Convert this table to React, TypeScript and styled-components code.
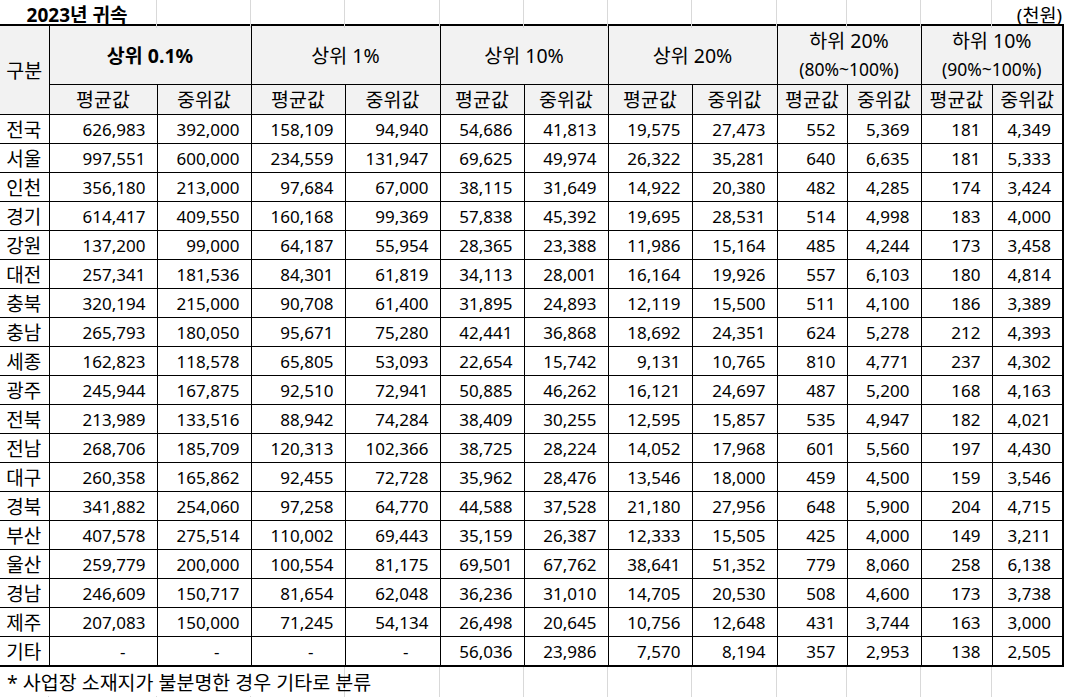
import React from 'react'
import styled, { createGlobalStyle } from 'styled-components'

const COLS = [49, 108, 94, 94, 95, 84, 84, 84, 85, 70, 74, 71, 71]
const GRID = COLS.map((w) => `${w}px`).join(' ')

const GlobalStyle = createGlobalStyle`
	html, body {
		margin: 0;
		padding: 0;
		background: #ffffff;
	}
	body {
		font-family: 'Noto Sans', 'Noto Sans CJK KR', sans-serif;
		color: #000000;
	}
`

const Sheet = styled.div`
	width: 1065px;
	height: 697px;
	overflow: hidden;
	background: #ffffff;
`

const GridRow = styled.div<{ $height: number }>`
	display: grid;
	grid-template-columns: ${GRID};
	height: ${(p) => p.$height}px;
`

const GridCell = styled.div<{ $span?: number; $line?: boolean; $align?: string }>`
	grid-column: span ${(p) => p.$span ?? 1};
	box-sizing: border-box;
	border-right: ${(p) => (p.$line === false ? 'none' : '1px solid #d9d9d9')};
	display: flex;
	align-items: center;
	justify-content: ${(p) => p.$align ?? 'flex-start'};
	white-space: nowrap;
`

const Title = styled.span`
	font-size: 19px;
	font-weight: 700;
	padding-right: 2px;
`

const Unit = styled.span`
	font-size: 18.5px;
	padding-right: 1px;
`

const Note = styled.span`
	font-size: 19.5px;
	padding-left: 7px;
`

const Table = styled.table`
	border-collapse: collapse;
	table-layout: fixed;
	width: 1064px;
	border-top: 2px solid #000000;
	border-bottom: 2px solid #000000;
	border-right: 2px solid #000000;
`

const HeadCell = styled.th<{ $bold?: boolean; $tall?: boolean }>`
	background: #f2f2f2;
	border: 1px solid #000000;
	padding: 0;
	height: ${(p) => (p.$tall ? 58 : 28)}px;
	font-size: 19.5px;
	font-weight: ${(p) => (p.$bold ? 700 : 400)};
	line-height: 29px;
	text-align: center;
	vertical-align: middle;
	white-space: nowrap;

	&:first-child {
		border-left: none;
	}
`

const SubTitle = styled.div`
	font-size: 17.5px;
`

const Label = styled.td`
	border: 1px solid #000000;
	border-left: none;
	padding: 0 1px 0 0;
	height: 28px;
	font-size: 19px;
	text-align: center;
	vertical-align: middle;
`

const Num = styled.td<{ $dash?: boolean }>`
	border: 1px solid #000000;
	padding: 0 ${(p) => (p.$dash ? 31 : 11)}px 0 0;
	height: 28px;
	font-size: 17px;
	text-align: right;
	vertical-align: middle;
	white-space: nowrap;
`

const groups = [
	{ title: '상위 0.1%', bold: true },
	{ title: '상위 1%' },
	{ title: '상위 10%' },
	{ title: '상위 20%' },
	{ title: '하위 20%', sub: '(80%~100%)' },
	{ title: '하위 10%', sub: '(90%~100%)' },
]

const rows: [string, string[]][] = [
	['전국', ['626,983', '392,000', '158,109', '94,940', '54,686', '41,813', '19,575', '27,473', '552', '5,369', '181', '4,349']],
	['서울', ['997,551', '600,000', '234,559', '131,947', '69,625', '49,974', '26,322', '35,281', '640', '6,635', '181', '5,333']],
	['인천', ['356,180', '213,000', '97,684', '67,000', '38,115', '31,649', '14,922', '20,380', '482', '4,285', '174', '3,424']],
	['경기', ['614,417', '409,550', '160,168', '99,369', '57,838', '45,392', '19,695', '28,531', '514', '4,998', '183', '4,000']],
	['강원', ['137,200', '99,000', '64,187', '55,954', '28,365', '23,388', '11,986', '15,164', '485', '4,244', '173', '3,458']],
	['대전', ['257,341', '181,536', '84,301', '61,819', '34,113', '28,001', '16,164', '19,926', '557', '6,103', '180', '4,814']],
	['충북', ['320,194', '215,000', '90,708', '61,400', '31,895', '24,893', '12,119', '15,500', '511', '4,100', '186', '3,389']],
	['충남', ['265,793', '180,050', '95,671', '75,280', '42,441', '36,868', '18,692', '24,351', '624', '5,278', '212', '4,393']],
	['세종', ['162,823', '118,578', '65,805', '53,093', '22,654', '15,742', '9,131', '10,765', '810', '4,771', '237', '4,302']],
	['광주', ['245,944', '167,875', '92,510', '72,941', '50,885', '46,262', '16,121', '24,697', '487', '5,200', '168', '4,163']],
	['전북', ['213,989', '133,516', '88,942', '74,284', '38,409', '30,255', '12,595', '15,857', '535', '4,947', '182', '4,021']],
	['전남', ['268,706', '185,709', '120,313', '102,366', '38,725', '28,224', '14,052', '17,968', '601', '5,560', '197', '4,430']],
	['대구', ['260,358', '165,862', '92,455', '72,728', '35,962', '28,476', '13,546', '18,000', '459', '4,500', '159', '3,546']],
	['경북', ['341,882', '254,060', '97,258', '64,770', '44,588', '37,528', '21,180', '27,956', '648', '5,900', '204', '4,715']],
	['부산', ['407,578', '275,514', '110,002', '69,443', '35,159', '26,387', '12,333', '15,505', '425', '4,000', '149', '3,211']],
	['울산', ['259,779', '200,000', '100,554', '81,175', '69,501', '67,762', '38,641', '51,352', '779', '8,060', '258', '6,138']],
	['경남', ['246,609', '150,717', '81,654', '62,048', '36,236', '31,010', '14,705', '20,530', '508', '4,600', '173', '3,738']],
	['제주', ['207,083', '150,000', '71,245', '54,134', '26,498', '20,645', '10,756', '12,648', '431', '3,744', '163', '3,000']],
	['기타', ['-', '-', '-', '-', '56,036', '23,986', '7,570', '8,194', '357', '2,953', '138', '2,505']],
]

export default function App() {
	return (
		<Sheet>
			<GlobalStyle />
			<GridRow $height={24}>
				<GridCell $span={2} $align="center">
					<Title>2023년 귀속</Title>
				</GridCell>
				{COLS.slice(2, 12).map((_, i) => (
					<GridCell key={i} />
				))}
				<GridCell $line={false} $align="flex-end">
					<Unit>(천원)</Unit>
				</GridCell>
			</GridRow>
			<Table>
				<colgroup>
					{COLS.map((w, i) => (
						<col key={i} style={{ width: w }} />
					))}
				</colgroup>
				<thead>
					<tr>
						<HeadCell rowSpan={2}>구분</HeadCell>
						{groups.map((g, i) => (
							<HeadCell key={i} colSpan={2} $tall $bold={g.bold}>
								<div>{g.title}</div>
								{g.sub && <SubTitle>{g.sub}</SubTitle>}
							</HeadCell>
						))}
					</tr>
					<tr>
						{groups.map((_, i) => (
							<React.Fragment key={i}>
								<HeadCell>평균값</HeadCell>
								<HeadCell>중위값</HeadCell>
							</React.Fragment>
						))}
					</tr>
				</thead>
				<tbody>
					{rows.map(([name, values]) => (
						<tr key={name}>
							<Label>{name}</Label>
							{values.map((v, i) => (
								<Num key={i} $dash={v === '-'}>
									{v}
								</Num>
							))}
						</tr>
					))}
				</tbody>
			</Table>
			<GridRow $height={29}>
				<GridCell $span={4} $line>
					<Note>* 사업장 소재지가 불분명한 경우 기타로 분류</Note>
				</GridCell>
				{COLS.slice(4, 12).map((_, i) => (
					<GridCell key={i} />
				))}
				<GridCell $line={false} />
			</GridRow>
			<GridRow $height={30}>
				{COLS.slice(0, 12).map((_, i) => (
					<GridCell key={i} />
				))}
				<GridCell $line={false} />
			</GridRow>
		</Sheet>
	)
}
